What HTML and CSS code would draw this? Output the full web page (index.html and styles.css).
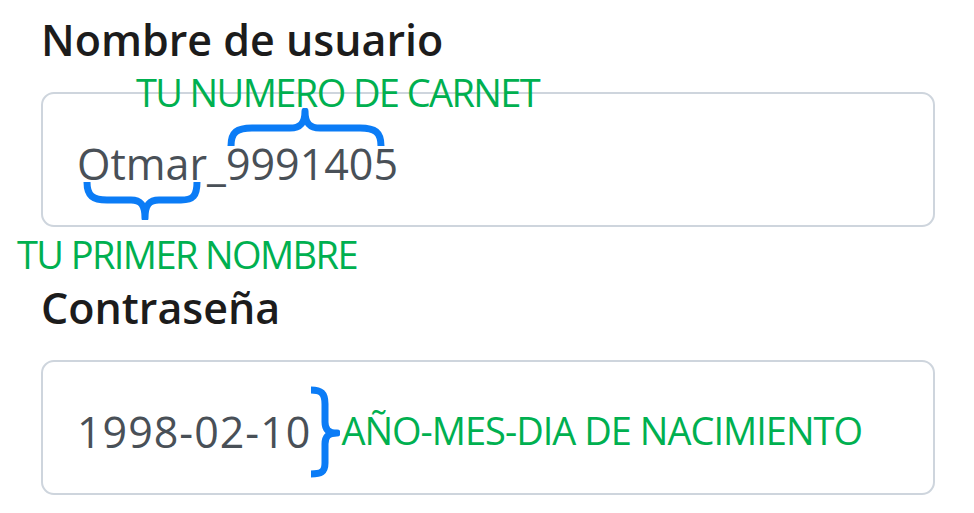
FILE: index.html
```html
<!DOCTYPE html>
<html lang="es">
<head>
<meta charset="utf-8">
<title>Acceso</title>
<link rel="stylesheet" href="styles.css">
</head>
<body>
<form class="form">
  <div class="group">
    <label class="label">Nombre de usuario</label>
    <div class="field">
      <span class="value"><span class="part part-name">Otmar<svg class="brace brace-under" viewBox="0 0 120 40" width="120" height="40" aria-hidden="true"><path d="M6 2 C6 16 12 20 26 20 L50 20 C60 20 64 25 64 38 C64 25 68 20 78 20 L100 20 C112 20 116 16 116 2"/></svg></span>_<span class="part part-id">9991405<svg class="brace brace-over" viewBox="0 0 168 40" width="168" height="40" aria-hidden="true"><path d="M9 38 C9 24 15 20 30 20 L68 20 C78 20 83 16 83 3 C83 16 88 20 98 20 L138 20 C153 20 159 24 159 38"/></svg><span class="note note-over">TU NUMERO DE CARNET</span></span></span>
    </div>
  </div>
  <p class="note note-name">TU PRIMER NOMBRE</p>
  <div class="group">
    <label class="label">Contraseña</label>
    <div class="field">
      <span class="value value-date">1998-02-10</span>
      <svg class="brace brace-side" viewBox="0 0 32 96" width="32" height="96" aria-hidden="true"><path d="M3 6 C13 6 17 9 17 20 L17 38 C17 45 20 49 29 49 C20 49 17 53 17 60 L17 79 C17 88 13 90 3 90"/></svg>
      <span class="note note-date">AÑO-MES-DIA DE NACIMIENTO</span>
    </div>
  </div>
</form>
</body>
</html>
```
FILE: styles.css
```css
* { box-sizing: border-box; }

html, body {
  margin: 0;
  background: #ffffff;
}

.form {
  margin: 0;
  padding: 14px 39px 0 41px;
  font-family: "Open Sans", "Noto Sans", sans-serif;
}

.label {
  display: block;
  font-size: 43px;
  line-height: 52px;
  font-weight: 600;
  color: #1c1c1c;
  margin: 0 0 26px 0;
}

.field {
  position: relative;
  display: flex;
  align-items: center;
  height: 135px;
  padding: 8px 0 0 34px;
  border: 2px solid #ced5dd;
  border-radius: 13px;
  background: #ffffff;
}

.value {
  font-size: 43px;
  line-height: 43px;
  font-weight: 400;
  color: #495057;
  white-space: nowrap;
}

.value-date {
  letter-spacing: 1px;
}

.part {
  position: relative;
  display: inline-block;
}

.brace {
  fill: none;
  stroke: #0b7cf6;
  stroke-width: 7;
  stroke-linecap: butt;
  stroke-linejoin: round;
}

.brace-under {
  position: absolute;
  left: 4px;
  top: 38px;
}

.brace-over {
  position: absolute;
  left: -4px;
  top: -34px;
}

.note {
  margin: 0;
  font-family: "Open Sans", "Noto Sans", sans-serif;
  font-size: 38px;
  line-height: 38px;
  font-weight: 400;
  letter-spacing: -1.6px;
  color: #00b050;
  white-space: nowrap;
}

.note-over {
  position: absolute;
  left: -90px;
  top: -69px;
}

.note-name {
  margin: 8px 0 9px -24px;
}

.brace-side {
  flex: none;
  margin-left: -3px;
}

.note-date {
  margin: 0 0 4px 1px;
  letter-spacing: -1px;
}
```
